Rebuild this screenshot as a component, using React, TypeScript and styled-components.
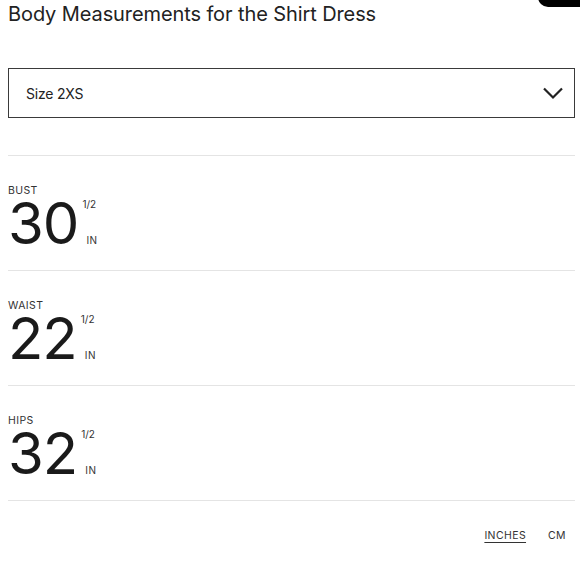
import {FC} from "react";
import styled, {createGlobalStyle} from "styled-components";

const GlobalStyle = createGlobalStyle`
  html, body {
    margin: 0;
    padding: 0;
    background: #fff;
  }

  body {
    font-family: Inter, "Noto Sans", sans-serif;
    color: #1f1f1f;
  }
`;

const StyledPage = styled.div`
  position: relative;
  width: 580px;
  height: 580px;
  overflow: hidden;
  padding: 0 5px 0 8px;
  box-sizing: border-box;
`;

const StyledClose = styled.div`
  position: absolute;
  top: -30px;
  right: -10px;
  width: 52px;
  height: 37px;
  border-radius: 10px;
  background: #000;
`;

const StyledTitle = styled.h2`
  margin: 0;
  padding-top: 2px;
  font-size: 20px;
  font-weight: 400;
  line-height: 25px;
  letter-spacing: -0.1px;
  color: #222;
`;

const StyledSelect = styled.div`
  margin-top: 41px;
  height: 50px;
  box-sizing: border-box;
  border: 1.5px solid #3a3a3a;
  display: flex;
  align-items: center;
  justify-content: space-between;
  padding: 0 10px 0 17px;
  font-size: 14px;
  letter-spacing: -0.2px;
  color: #222;
`;

const StyledList = styled.div`
  margin-top: 37px;
  border-bottom: 1px solid #e4e4e4;
`;

const StyledRow = styled.div`
  border-top: 1px solid #e4e4e4;
  height: 115px;
  box-sizing: border-box;
  padding-top: 28px;
`;

const StyledLabel = styled.div`
  font-size: 10.5px;
  line-height: 13px;
  letter-spacing: 0.4px;
  color: #333;
`;

const StyledValue = styled.div`
  display: flex;
  align-items: stretch;
  margin-top: 1px;
`;

const StyledNumber = styled.span`
  font-size: 58px;
  line-height: 50px;
  letter-spacing: -1px;
  color: #1a1a1a;
`;

const StyledSide = styled.div`
  display: flex;
  flex-direction: column;
  justify-content: space-between;
  margin-left: 4px;
  padding: 0 0 2px;
  font-size: 10px;
  color: #333;
`;

const StyledIn = styled.span<{$shift: number}>`
  margin-left: ${p => p.$shift}px;
  letter-spacing: 0.5px;
`;

const StyledUnits = styled.div`
  display: flex;
  justify-content: flex-end;
  gap: 22px;
  padding: 28px 9px 0 0;
  font-size: 10.5px;
  letter-spacing: 0.4px;
  color: #333;
`;

const StyledUnit = styled.span<{$active?: boolean}>`
  text-decoration: ${p => p.$active ? "underline" : "none"};
  text-underline-offset: 3px;
`;

const rows = [
    {label: "BUST", value: "30"},
    {label: "WAIST", value: "22"},
    {label: "HIPS", value: "32"},
];

const App: FC = () => {
    return (
        <StyledPage>
            <GlobalStyle/>
            <StyledClose/>
            <StyledTitle>Body Measurements for the Shirt Dress</StyledTitle>
            <StyledSelect>
                <span>Size 2XS</span>
                <svg width="22" height="14" viewBox="0 0 22 14" fill="none">
                    <path d="M2 2.5 L11 11.5 L20 2.5" stroke="#222" strokeWidth="2.2"/>
                </svg>
            </StyledSelect>
            <StyledList>
                {rows.map(r => (
                    <StyledRow key={r.label}>
                        <StyledLabel>{r.label}</StyledLabel>
                        <StyledValue>
                            <StyledNumber>{r.value}</StyledNumber>
                            <StyledSide>
                                <span>1/2</span>
                                <StyledIn $shift={4}>IN</StyledIn>
                            </StyledSide>
                        </StyledValue>
                    </StyledRow>
                ))}
            </StyledList>
            <StyledUnits>
                <StyledUnit $active>INCHES</StyledUnit>
                <StyledUnit>CM</StyledUnit>
            </StyledUnits>
        </StyledPage>
    );
};

export default App;
